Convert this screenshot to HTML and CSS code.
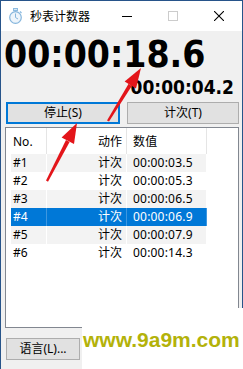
FILE: index.html
```html
<!DOCTYPE html>
<html lang="zh-CN">
<head>
    <meta charset="UTF-8">
    <title>秒表计数器</title>
    <link rel="stylesheet" href="styles.css">
</head>
<body>
    <div class="window">
        <div class="titlebar">
            <svg class="app-icon" width="15" height="16" viewBox="0 0 15 16">
                <rect x="5.5" y="0.5" width="4" height="2" fill="#d6e7f5" stroke="#8dbbe0" stroke-width="1"/>
                <line x1="12" y1="3.5" x2="13.5" y2="5" stroke="#8dbbe0" stroke-width="1.2"/>
                <circle cx="7.5" cy="9.5" r="5.8" fill="#eef5fb" stroke="#86b6dd" stroke-width="1.2"/>
                <line x1="7.5" y1="9.5" x2="7.5" y2="5.5" stroke="#86b6dd" stroke-width="1"/>
                <line x1="7.5" y1="9.5" x2="10" y2="11" stroke="#86b6dd" stroke-width="1"/>
            </svg>
            <span class="title">秒表计数器</span>
            <div class="caption-btns">
                <div class="cap-btn">
                    <svg width="10" height="10" viewBox="0 0 10 10"><line x1="0" y1="5.5" x2="10" y2="5.5" stroke="#000" stroke-width="1"/></svg>
                </div>
                <div class="cap-btn">
                    <svg width="10" height="10" viewBox="0 0 10 10"><rect x="0.5" y="0.5" width="9" height="9" fill="none" stroke="#ccc" stroke-width="1"/></svg>
                </div>
                <div class="cap-btn">
                    <svg width="10" height="10" viewBox="0 0 10 10"><path d="M0 0 L10 10 M10 0 L0 10" stroke="#000" stroke-width="1.1"/></svg>
                </div>
            </div>
        </div>

        <div class="client">
            <div class="time-main">00:00:18.6</div>
            <div class="time-lap">00:00:04.2</div>

            <div class="btn-row">
                <button class="btn btn-default btn-stop">停止(S)</button>
                <button class="btn btn-lap">计次(T)</button>
            </div>

            <div class="listview">
                <div class="lv-row lv-head">
                    <span class="c-no">No.</span>
                    <span class="c-act">动作</span>
                    <span class="c-val">数值</span>
                </div>
                <div class="lv-row alt">
                    <span class="c-no">#1</span><span class="c-act">计次</span><span class="c-val">00:00:03.5</span>
                </div>
                <div class="lv-row">
                    <span class="c-no">#2</span><span class="c-act">计次</span><span class="c-val">00:00:05.3</span>
                </div>
                <div class="lv-row alt">
                    <span class="c-no">#3</span><span class="c-act">计次</span><span class="c-val">00:00:06.5</span>
                </div>
                <div class="lv-row selected">
                    <span class="c-no">#4</span><span class="c-act">计次</span><span class="c-val">00:00:06.9</span>
                </div>
                <div class="lv-row alt">
                    <span class="c-no">#5</span><span class="c-act">计次</span><span class="c-val">00:00:07.9</span>
                </div>
                <div class="lv-row">
                    <span class="c-no">#6</span><span class="c-act">计次</span><span class="c-val">00:00:14.3</span>
                </div>
            </div>

            <button class="btn btn-lang">语言(L)...</button>
        </div>
    </div>

    <!-- annotation arrows drawn over the screenshot -->
    <svg class="arrows" width="243" height="369" viewBox="0 0 243 369">
        <polygon points="107,120.5 109,121.5 131.8,86 128.6,83.8" fill="#e3151a"/>
        <polygon points="141,68 136,88.6 124.6,81.4" fill="#e3151a"/>
        <polygon points="46,180.5 48,181.8 69.6,142 66,140" fill="#e3151a"/>
        <polygon points="77,123 74,144 61.6,137.6" fill="#e3151a"/>
    </svg>

    <div class="watermark">www.9a9m.com</div>
</body>
</html>
```

FILE: styles.css
```css
body {
    margin: 0;
    padding: 0;
    position: relative;
    width: 243px;
    height: 369px;
    overflow: hidden;
    font-family: "Noto Sans", "Noto Sans CJK SC", sans-serif;
    font-size: 12px;
    color: #000;
}
.window {
    box-sizing: border-box;
    width: 243px;
    height: 369px;
    border: 1px solid #27548a;
    border-bottom: none;
    background: #f0f0f0;
}
.titlebar {
    height: 30px;
    background: #fff;
    display: flex;
    align-items: center;
}
.app-icon {
    margin-left: 7px;
    margin-top: -1px;
}
.title {
    margin-left: 7px;
    font-family: "Noto Sans CJK SC", sans-serif;
    font-size: 12px;
    line-height: 16px;
}
.caption-btns {
    margin-left: auto;
    display: flex;
}
.cap-btn {
    width: 46px;
    height: 30px;
    display: flex;
    align-items: center;
    justify-content: center;
}
.client {
    display: flex;
    flex-direction: column;
}
.time-main {
    font-family: "DejaVu Sans Condensed", "DejaVu Sans", sans-serif;
    font-stretch: condensed;
    font-weight: bold;
    font-size: 37px;
    line-height: 37px;
    margin-top: 5px;
    padding-left: 3px;
}
.time-lap {
    font-family: "DejaVu Sans Condensed", "DejaVu Sans", sans-serif;
    font-stretch: condensed;
    font-weight: bold;
    font-size: 19px;
    line-height: 19px;
    margin-top: 5px;
    padding-right: 8px;
    text-align: right;
}
.btn-row {
    display: flex;
    gap: 7px;
    margin-top: 5px;
    margin-left: 5px;
}
.btn {
    box-sizing: border-box;
    height: 22px;
    background: #e1e1e1;
    border: 1px solid #adadad;
    font-family: "Noto Sans", "Noto Sans CJK SC", sans-serif;
    font-size: 12px;
    line-height: 18px;
    padding: 0;
    color: #000;
}
.btn-default {
    border: 2px solid #0078d7;
}
.btn-stop {
    width: 114px;
}
.btn-lap {
    width: 112px;
}
.listview {
    box-sizing: border-box;
    width: 234px;
    height: 201px;
    margin-top: 3px;
    margin-left: 4px;
    border: 1px solid #828790;
    background: #fff;
    padding-left: 5px;
}
.lv-row {
    display: grid;
    grid-template-columns: 36px 80px 80px;
    height: 18px;
    line-height: 18px;
    width: 196px;
}
.lv-row span {
    box-sizing: border-box;
    border-right: 1px solid #fff;
    white-space: nowrap;
}
.lv-head {
    height: 26px;
    line-height: 26px;
}
.lv-head span {
    border-right-color: #e5e5e5;
    padding-top: 1px;
}
.lv-row.alt {
    background: #f3f3f3;
}
.lv-row.selected {
    background: #0078d7;
    color: #fff;
}
.lv-row.selected span {
    border-right-color: #3d97e0;
}
.c-no {
    padding-left: 2px;
}
.c-act {
    text-align: right;
    padding-right: 4px;
}
.c-val {
    padding-left: 6px;
    letter-spacing: 0.2px;
}
.btn-lang {
    width: 74px;
    margin-top: 10px;
    margin-left: 5px;
}
.arrows {
    position: absolute;
    left: 0;
    top: 0;
    pointer-events: none;
}
.watermark {
    position: absolute;
    left: 82px;
    top: 308px;
    width: 161px;
    height: 61px;
    box-sizing: border-box;
    background: #fff;
    padding-top: 21px;
    padding-left: 1px;
    font-family: "Liberation Sans", Arial, sans-serif;
    font-weight: bold;
    font-size: 21px;
    line-height: 21px;
    color: #b3b20a;
    white-space: nowrap;
}
```
